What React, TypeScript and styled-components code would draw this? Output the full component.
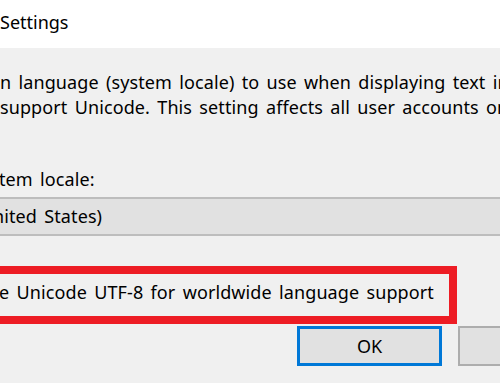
import React from "react";
import styled, { createGlobalStyle } from "styled-components";

const Global = createGlobalStyle`
  html, body {
    margin: 0;
    padding: 0;
    background: #f0f0f0;
    overflow: hidden;
  }
  * { box-sizing: border-box; }
`;

const Window = styled.div`
  width: 500px;
  height: 383px;
  overflow: hidden;
  background: #f0f0f0;
  font-family: "Noto Sans", "Open Sans", sans-serif;
  color: #000;
  display: flex;
  flex-direction: column;
`;

const TitleBar = styled.div`
  height: 48px;
  background: #ffffff;
  font-size: 18px;
  line-height: 45px;
  padding-bottom: 3px;
  white-space: nowrap;
  flex-shrink: 0;
`;

const Body = styled.div`
  display: flex;
  flex-direction: column;
  font-size: 18px;
  letter-spacing: 0.1px;
  word-spacing: 2.5px;
  white-space: nowrap;
`;

const Paragraph = styled.div`
  margin-top: 22px;
  line-height: 25px;
`;

const Line = styled.div<{ $indent?: number }>`
  margin-left: ${(p) => p.$indent ?? 0}px;
`;

const Label = styled.div`
  margin-top: 47px;
  line-height: 25px;
  margin-left: -1px;
`;

const Dropdown = styled.div`
  margin-top: 5px;
  margin-left: -20px;
  width: 540px;
  height: 39px;
  background: #e1e1e1;
  border-top: 2px solid #bdbdbd;
  border-bottom: 2px solid #bdbdbd;
  line-height: 35px;
  padding-left: 13px;
`;

const Annotation = styled.div`
  margin-top: 30px;
  margin-left: -20px;
  width: 477px;
  height: 58px;
  border: 8px solid #ed1c24;
  line-height: 37px;
  padding-bottom: 5px;
  padding-left: 11px;
`;

const ButtonRow = styled.div`
  margin-top: 2px;
  display: flex;
  gap: 16px;
  padding-left: 297px;
`;

const Button = styled.div<{ $default?: boolean }>`
  width: 145px;
  height: 40px;
  flex-shrink: 0;
  background: #e1e1e1;
  border: ${(p) => (p.$default ? "3px solid #0078d7" : "2px solid #adadad")};
  display: flex;
  align-items: center;
  justify-content: center;
  font-size: 18px;
  letter-spacing: 0;
  word-spacing: 0;
`;

export default function App() {
  return (
    <>
      <Global />
      <Window>
        <TitleBar>Settings</TitleBar>
        <Body>
          <Paragraph>
            <Line $indent={0}>n language (system locale) to use when displaying text in</Line>
            <Line $indent={0}>support Unicode. This setting affects all user accounts on</Line>
          </Paragraph>
          <Label>tem locale:</Label>
          <Dropdown>nited States)</Dropdown>
          <Annotation>e Unicode UTF-8 for worldwide language support</Annotation>
          <ButtonRow>
            <Button $default>OK</Button>
            <Button>Cancel</Button>
          </ButtonRow>
        </Body>
      </Window>
    </>
  );
}
